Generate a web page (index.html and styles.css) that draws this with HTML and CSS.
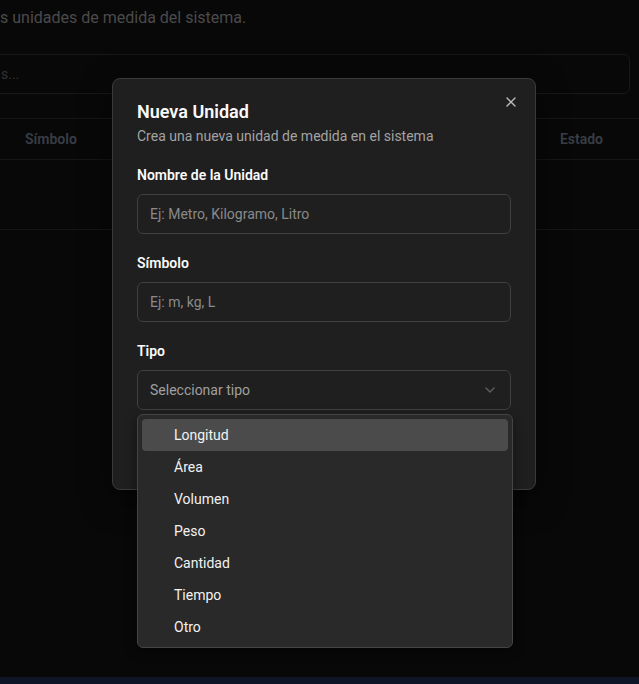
FILE: index.html
```html
<!DOCTYPE html>
<html lang="es">
<head>
<meta charset="utf-8">
<title>Nueva Unidad</title>
<link rel="stylesheet" href="styles.css">
</head>
<body>
<main class="page">
  <p class="page-desc">s unidades de medida del sistema.</p>
  <div class="search"><span class="search-ph">s...</span></div>
  <div class="table">
    <div class="thead">
      <span class="th th-symbol">Símbolo</span>
      <span class="th th-state">Estado</span>
    </div>
    <div class="tbody"></div>
  </div>
</main>
<div class="footer-strip"></div>

<div class="dialog" role="dialog">
  <button class="close" aria-label="Cerrar">
    <svg width="16" height="16" viewBox="0 0 24 24" fill="none" stroke="currentColor" stroke-width="2" stroke-linecap="round" stroke-linejoin="round"><path d="M18 6 6 18"/><path d="m6 6 12 12"/></svg>
  </button>
  <header class="dialog-header">
    <h2 class="dialog-title">Nueva Unidad</h2>
    <p class="dialog-desc">Crea una nueva unidad de medida en el sistema</p>
  </header>
  <form class="form">
    <div class="field">
      <label class="label">Nombre de la Unidad</label>
      <div class="input"><span class="ph">Ej: Metro, Kilogramo, Litro</span></div>
    </div>
    <div class="field">
      <label class="label">Símbolo</label>
      <div class="input"><span class="ph">Ej: m, kg, L</span></div>
    </div>
    <div class="field">
      <label class="label">Tipo</label>
      <div class="input select"><span class="ph ph-select">Seleccionar tipo</span>
        <svg class="chev" width="16" height="16" viewBox="0 0 24 24" fill="none" stroke="currentColor" stroke-width="2" stroke-linecap="round" stroke-linejoin="round"><path d="m6 9 6 6 6-6"/></svg>
      </div>
    </div>
    <div class="actions">
      <span class="btn btn-outline">Cancelar</span>
      <span class="btn btn-primary">Crear Unidad</span>
    </div>
  </form>
</div>

<ul class="menu" role="listbox">
  <li class="item active">Longitud</li>
  <li class="item">Área</li>
  <li class="item">Volumen</li>
  <li class="item">Peso</li>
  <li class="item">Cantidad</li>
  <li class="item">Tiempo</li>
  <li class="item">Otro</li>
</ul>
</body>
</html>
```
FILE: styles.css
```css
* { box-sizing: border-box; }
html, body { margin: 0; padding: 0; }
body {
  background: #080808;
  font-family: "Segoe UI", Roboto, "Noto Sans", sans-serif;
  width: 639px;
  height: 684px;
  overflow: hidden;
  position: relative;
}
.page { display: flex; flex-direction: column; }
.page-desc {
  margin: 6px 0 0 0;
  font-size: 16px;
  line-height: 24px;
  color: #4b4b4b;
}
.search {
  margin: 24px 9px 0 -10px;
  height: 40px;
  border: 1px solid #181818;
  border-radius: 6px;
  display: flex;
  align-items: center;
  padding-left: 10px;
}
.search-ph { font-size: 14px; color: #333; }
.table { margin-top: 24px; }
.thead {
  height: 42px;
  border-top: 1px solid #161616;
  border-bottom: 1px solid #161616;
  display: flex;
  align-items: center;
  justify-content: space-between;
  padding: 0 36px 0 25px;
}
.th { font-size: 14px; font-weight: 600; color: #393e46; }
.tbody { height: 70px; border-bottom: 1px solid #161616; }
.footer-strip {
  position: absolute;
  left: 0; right: 0; bottom: 0;
  height: 7px;
  background: #0d1526;
}

.dialog {
  position: absolute;
  left: 112px;
  top: 78px;
  width: 424px;
  background: #1f1f1f;
  border: 1px solid #3a3a3a;
  border-radius: 8px;
  padding: 24px;
  box-shadow: 0 10px 30px rgba(0,0,0,0.5);
}
.close {
  position: absolute;
  top: 15px;
  right: 16px;
  width: 16px;
  height: 16px;
  padding: 0;
  border: 0;
  background: none;
  color: #bdbdbd;
  display: flex;
}
.dialog-header { display: flex; flex-direction: column; gap: 5px; }
.dialog-title {
  margin: 0;
  font-size: 18px;
  line-height: 18px;
  font-weight: 600;
  color: #fafafa;
}
.dialog-desc {
  margin: 0;
  font-size: 14px;
  line-height: 20px;
  color: #a3a3a3;
}
.form {
  margin-top: 20px;
  display: flex;
  flex-direction: column;
  gap: 20px;
}
.field { display: flex; flex-direction: column; gap: 10px; }
.label {
  font-size: 14px;
  line-height: 18px;
  font-weight: 600;
  color: #fafafa;
}
.input {
  height: 40px;
  border: 1px solid #404040;
  border-radius: 6px;
  display: flex;
  align-items: center;
  padding: 0 12px;
}
.ph { font-size: 14px; color: #8a8a8a; }
.select { justify-content: space-between; }
.ph-select { color: #a0a0a0; }
.chev { color: #8a8a8a; opacity: 0.6; }
.actions {
  margin-top: -5px;
  display: flex;
  justify-content: flex-end;
  gap: 8px;
}
.btn {
  height: 40px;
  padding: 0 16px;
  display: flex;
  align-items: center;
  font-size: 14px;
  border-radius: 6px;
}
.btn-outline { border: 1px solid #404040; color: #fafafa; }
.btn-primary { background: #fafafa; color: #171717; }

.menu {
  position: absolute;
  left: 137px;
  top: 414px;
  width: 376px;
  margin: 0;
  padding: 4px;
  list-style: none;
  background: #292929;
  border: 1px solid #454545;
  border-radius: 6px;
  box-shadow: 0 4px 12px rgba(0,0,0,0.4);
}
.item {
  height: 32px;
  display: flex;
  align-items: center;
  padding-left: 32px;
  font-size: 14px;
  color: #f2f2f2;
  border-radius: 4px;
}
.item.active { background: #4b4b4b; }
```
